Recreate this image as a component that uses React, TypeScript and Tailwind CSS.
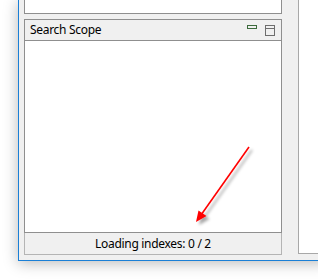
import * as React from "react";

function MinimizeIcon() {
  return (
    <svg width="10" height="5" viewBox="0 0 10 5" className="block">
      <rect x="0.5" y="0.5" width="9" height="3" fill="none" stroke="#3d6b3d" />
    </svg>
  );
}

function MaximizeIcon() {
  return (
    <svg width="10" height="11" viewBox="0 0 10 11" className="block">
      <rect x="0.5" y="0.5" width="9" height="10" fill="none" stroke="#6d6d6d" />
      <line x1="0" y1="3.5" x2="10" y2="3.5" stroke="#6d6d6d" />
    </svg>
  );
}

function Arrow() {
  return (
    <svg
      width="318"
      height="280"
      viewBox="0 0 318 280"
      className="pointer-events-none absolute left-0 top-0"
    >
      <defs>
        <filter id="sh" x="-20%" y="-20%" width="140%" height="140%">
          <feDropShadow dx="3" dy="3" stdDeviation="1.5" floodColor="#000" floodOpacity="0.35" />
        </filter>
      </defs>
      <g filter="url(#sh)">
        <line x1="249" y1="147" x2="201" y2="215" stroke="#ff0000" strokeWidth="1.6" />
        <polygon points="196,222 198.5,210.5 206.5,216" fill="#ff0000" />
      </g>
    </svg>
  );
}

export default function App() {
  return (
    <div
      className="relative h-[280px] w-[318px] overflow-hidden bg-white"
      style={{ fontFamily: '"Noto Sans", "Liberation Sans", sans-serif' }}
    >
      <div className="ml-[18px] flex h-[261px] w-[310px] border-b border-l border-[#1a7fd6] bg-[#f0f0f0] shadow-[0_2px_14px_rgba(0,0,0,0.28)]">
        <div className="flex w-[264px] flex-col pl-[5px]">
          <div className="h-[14px] w-[258px] border-x border-b border-[#8f8f8f] bg-white" />
          <div className="mt-[5px] flex h-[214px] w-[258px] flex-col border border-[#8f8f8f]">
            <div className="flex h-[21px] items-center border-b border-[#8f8f8f] bg-[#f0f0f0] pl-[5px] pr-[6px]">
              <span className="text-[12px] leading-none tracking-[-0.3px] text-black">Search Scope</span>
              <div className="ml-auto flex items-start gap-[8px] pt-[1px]">
                <MinimizeIcon />
                <MaximizeIcon />
              </div>
            </div>
            <div className="flex-1 bg-white" />
          </div>
          <div className="flex h-[22px] w-[258px] items-center justify-center border border-t-0 border-[#b4b4b4] bg-[#f0f0f0] text-[12px] tracking-[-0.3px] text-black">
            Loading indexes: 0 / 2
          </div>
        </div>
        <div className="ml-[16px] h-[254px] w-[30px] border-b border-l border-[#a8a8a8] bg-white" />
      </div>
      <Arrow />
    </div>
  );
}
